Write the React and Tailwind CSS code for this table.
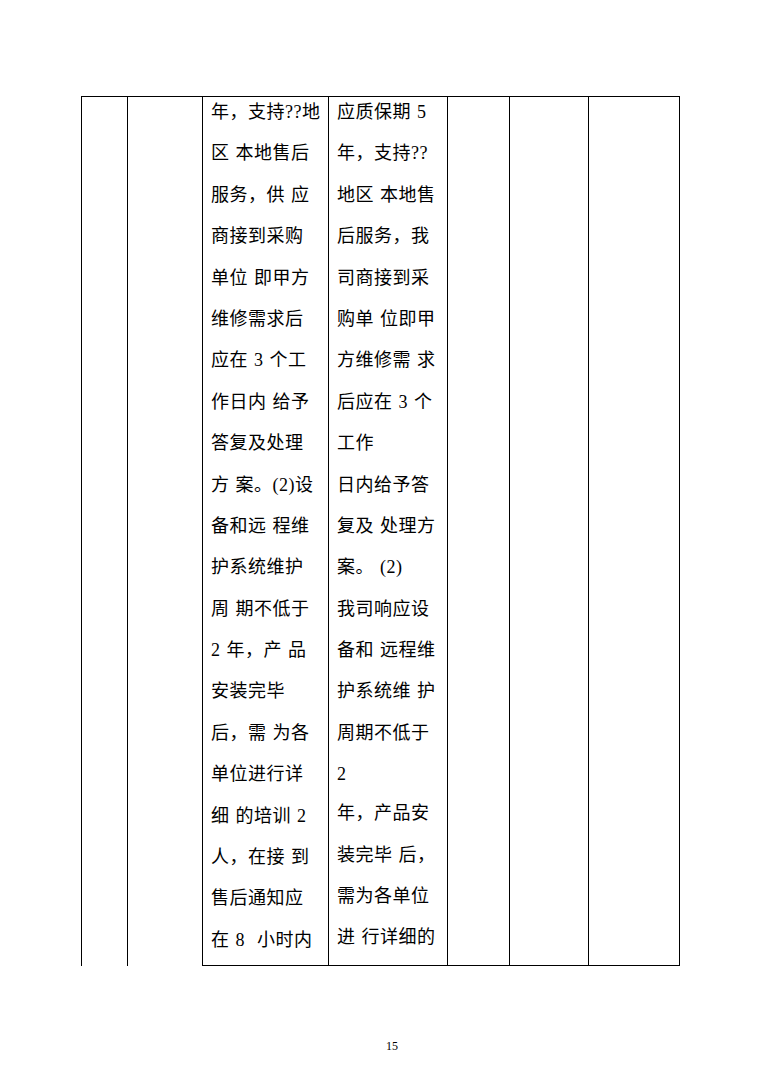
import React from 'react';

const colThree = [
  '年，支持??地',
  '区 本地售后',
  '服务，供 应',
  '商接到采购',
  '单位 即甲方',
  '维修需求后',
  '应在 3 个工',
  '作日内 给予',
  '答复及处理',
  '方 案。(2)设',
  '备和远 程维',
  '护系统维护',
  '周 期不低于',
  '2 年，产 品',
  '安装完毕',
  '后，需 为各',
  '单位进行详',
  '细 的培训 2',
  '人，在接 到',
  '售后通知应',
  '在 8  小时内',
];

const colFour = [
  '应质保期 5',
  '年，支持??',
  '地区 本地售',
  '后服务，我',
  '司商接到采',
  '购单 位即甲',
  '方维修需 求',
  '后应在 3 个',
  '工作',
  '日内给予答',
  '复及 处理方',
  '案。 (2)',
  '我司响应设',
  '备和 远程维',
  '护系统维 护',
  '周期不低于',
  '2',
];

const colFourTail = ['年，产品安', '装完毕 后，', '需为各单位', '进 行详细的'];

const Line = ({ text }) => (
  <div className="h-[30px] leading-[30px] whitespace-pre tracking-[0.5px] [word-spacing:1px]">{text}</div>
);

const App = () => {
  return (
    <div
      className="w-[761px] h-[1077px] bg-white text-black overflow-hidden"
      style={{ fontFamily: '"Liberation Serif", "Noto Sans CJK SC", serif' }}
    >
      <div className="pt-[96px] pl-[81px]">
        <div className="flex w-[599px] border-t border-black text-[18px]">
          <div className="w-[46px] border-l border-black" />
          <div className="w-[75px] border-l border-black" />
          <div className="w-[126px] border-l border-b border-black pl-[8px] pb-[10px]">
            <div className="flex flex-col gap-[11.4px]">
              {colThree.map((t, i) => (
                <Line key={i} text={t} />
              ))}
            </div>
          </div>
          <div className="w-[119px] border-l border-b border-black pl-[8px]">
            <div className="flex flex-col gap-[11.4px]">
              {colFour.map((t, i) => (
                <Line key={i} text={t} />
              ))}
            </div>
            <div className="flex flex-col gap-[11.4px] mt-[9px]">
              {colFourTail.map((t, i) => (
                <Line key={i} text={t} />
              ))}
            </div>
          </div>
          <div className="w-[62px] border-l border-b border-black" />
          <div className="w-[79px] border-l border-b border-black" />
          <div className="flex-1 border-l border-r border-b border-black" />
        </div>
      </div>
      <div className="mt-[73px] pl-[23px] text-center text-[12px] leading-[14px]">15</div>
    </div>
  );
};

export default App;
